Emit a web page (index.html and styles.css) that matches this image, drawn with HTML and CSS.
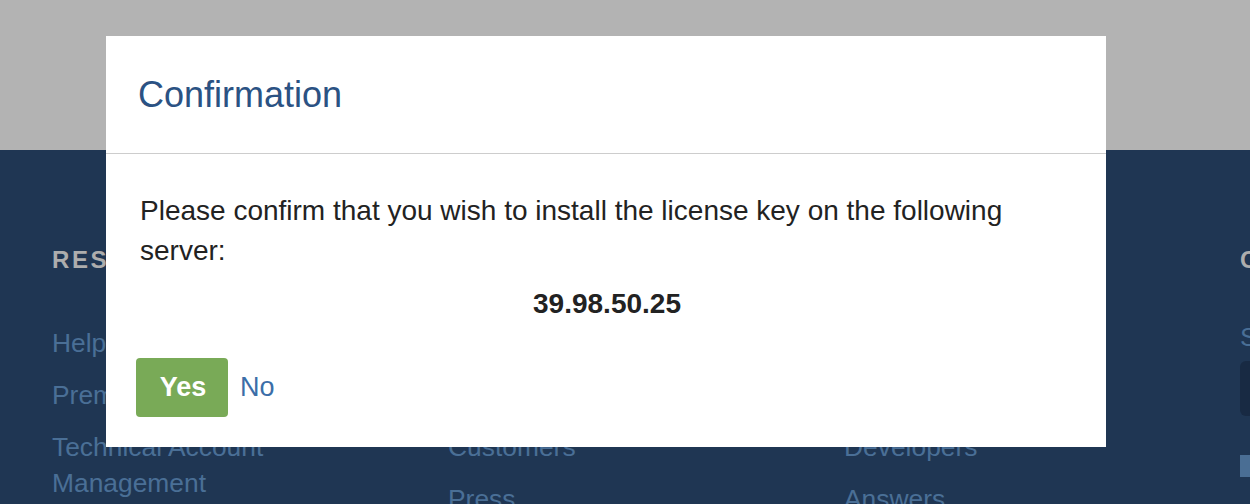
FILE: index.html
```html
<!DOCTYPE html>
<html lang="en">
<head>
<meta charset="utf-8">
<title>Confirmation</title>
<link rel="stylesheet" href="styles.css">
</head>
<body>
<div class="page">
  <header class="site-header"></header>
  <footer class="site-footer">
    <div class="footer-col">
      <h3 class="footer-heading">RESOURCES</h3>
      <ul class="footer-links">
        <li><a href="#">Help Center</a></li>
        <li><a href="#">Premium Support</a></li>
        <li><a href="#">Technical Account Management</a></li>
      </ul>
    </div>
    <div class="footer-col">
      <h3 class="footer-heading">COMPANY</h3>
      <ul class="footer-links">
        <li><a href="#">About</a></li>
        <li><a href="#">Careers</a></li>
        <li><a href="#">Customers</a></li>
        <li><a href="#">Press</a></li>
      </ul>
    </div>
    <div class="footer-col">
      <h3 class="footer-heading">COMMUNITY</h3>
      <ul class="footer-links">
        <li><a href="#">Blog</a></li>
        <li><a href="#">Events</a></li>
        <li><a href="#">Developers</a></li>
        <li><a href="#">Answers</a></li>
      </ul>
    </div>
    <div class="footer-col">
      <h3 class="footer-heading footer-heading-tight">CONNECT</h3>
      <p class="footer-label">Subscribe</p>
      <div class="footer-input"></div>
      <div class="footer-check"></div>
    </div>
  </footer>
</div>

<div class="modal" role="dialog" aria-labelledby="modal-title">
  <div class="modal-header">
    <h4 class="modal-title" id="modal-title">Confirmation</h4>
  </div>
  <div class="modal-body">
    <p class="modal-text">Please confirm that you wish to install the license key on the following server:</p>
    <p class="modal-ip">39.98.50.25</p>
  </div>
  <div class="modal-footer">
    <button class="btn-yes" type="button">Yes</button>
    <a class="link-no" href="#">No</a>
  </div>
</div>
</body>
</html>
```

FILE: styles.css
```css
* {
  box-sizing: border-box;
}

html, body {
  margin: 0;
  padding: 0;
  width: 1250px;
  height: 504px;
  overflow: hidden;
  font-family: "Liberation Sans", Arial, Helvetica, sans-serif;
}

.page {
  display: flex;
  flex-direction: column;
  height: 504px;
}

.site-header {
  height: 150px;
  background: #b3b3b3;
  flex: none;
}

.site-footer {
  flex: 1;
  background: #1f3653;
  display: grid;
  grid-template-columns: repeat(4, 396px);
  padding: 95px 0 0 52px;
  overflow: hidden;
}

.footer-col {
  width: 300px;
}

.footer-heading {
  margin: 0 0 50px;
  font-size: 24px;
  line-height: 30px;
  font-weight: bold;
  letter-spacing: 2.6px;
  color: #adadad;
  white-space: nowrap;
}

.footer-heading-tight {
  margin-bottom: 44px;
}

.footer-links {
  list-style: none;
  margin: 0;
  padding: 0;
  display: flex;
  flex-direction: column;
  gap: 16px;
}

.footer-links a {
  font-size: 26.4px;
  line-height: 36px;
  color: #4a6f96;
  text-decoration: none;
}

.footer-label {
  margin: 0 0 6px;
  font-size: 26.4px;
  line-height: 36px;
  color: #4a6f96;
}

.footer-input {
  width: 300px;
  height: 55px;
  border-radius: 6px;
  background: #182a43;
  margin-bottom: 39px;
}

.footer-check {
  width: 22px;
  height: 22px;
  background: #4a6e94;
}

.modal {
  position: absolute;
  left: 106px;
  top: 36px;
  width: 1000px;
  height: 411px;
  background: #ffffff;
  display: flex;
  flex-direction: column;
}

.modal-header {
  padding: 33px 32px 32px;
  border-bottom: 1px solid #cdcdcd;
}

.modal-title {
  margin: 0;
  font-size: 36px;
  line-height: 52px;
  font-weight: normal;
  color: #2b5283;
}

.modal-body {
  padding: 37px 32px 0 34px;
  color: #222222;
}

.modal-text {
  margin: 0 0 13px;
  font-size: 28px;
  line-height: 40px;
}

.modal-ip {
  margin: 0;
  text-align: center;
  font-size: 28px;
  line-height: 40px;
  font-weight: bold;
}

.modal-footer {
  display: flex;
  align-items: center;
  gap: 12px;
  padding: 34px 30px 0;
}

.btn-yes {
  width: 92px;
  height: 59px;
  border: none;
  border-radius: 4px;
  background: #79aa57;
  color: #ffffff;
  font-family: inherit;
  font-size: 27px;
  font-weight: bold;
  padding: 0 0 0 2px;
  cursor: pointer;
}

.link-no {
  font-size: 27px;
  color: #3b6ea8;
  text-decoration: none;
}
```
